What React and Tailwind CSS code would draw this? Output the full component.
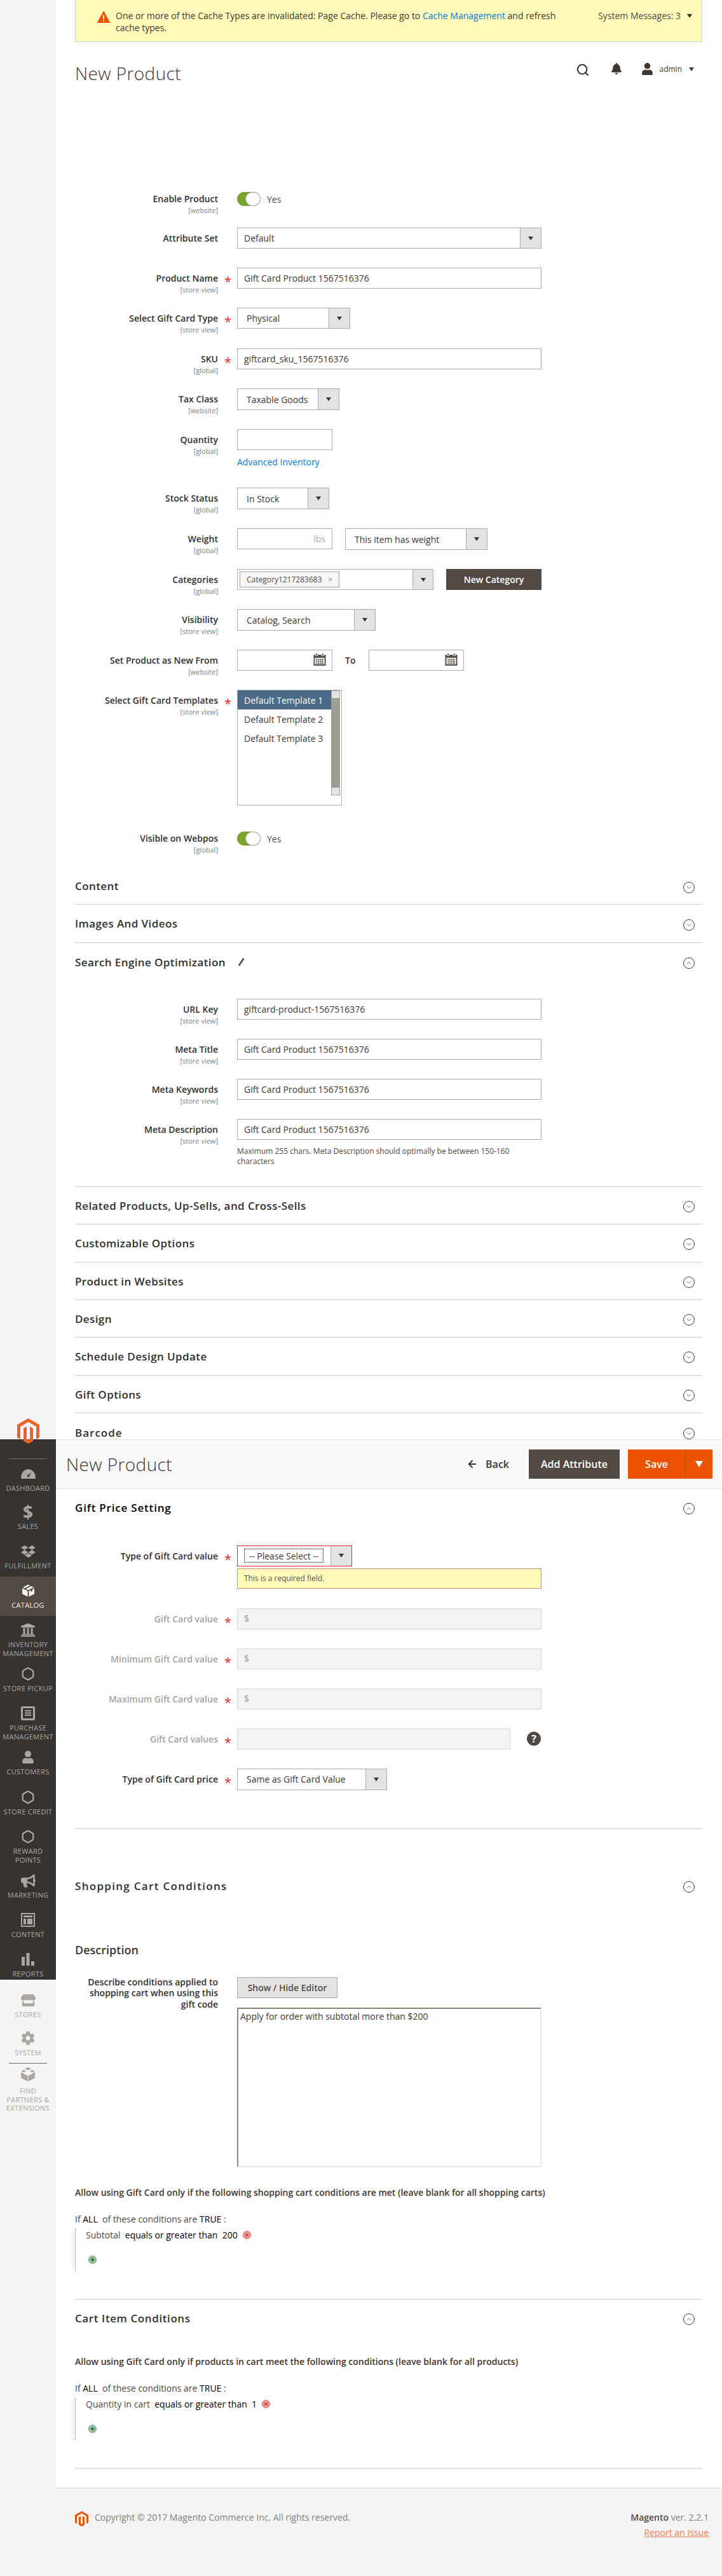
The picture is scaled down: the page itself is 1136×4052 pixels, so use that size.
import clsx from 'clsx'
import { ArrowLeft, ChevronDown, ChevronUp, Hexagon, Search } from 'lucide-react'
import { FaBell, FaBullhorn, FaCog, FaDropbox, FaStore, FaUniversity, FaUser } from 'react-icons/fa'

const MagentoLogo = ({ className }) => (
	<svg viewBox="0 0 35 40" className={className} fill="currentColor">
		<path d="M17.5 0 35 10v20l-5 2.900v-20L17.5 5.700 5 12.900v20L0 30V10z" />
		<path d="M17.5 40 10 35.700v-20l5-2.900v20l2.500 1.400 2.500-1.400v-20l5 2.900v20z" />
	</svg>
)

const GaugeIcon = () => (
	<svg viewBox="0 0 24 16" className="w-[23px] h-[15px]" fill="currentColor">
		<path fillRule="evenodd" d="M12 0C5 0 0 6 0 13v3h24v-3C24 6 19 0 12 0zm1.200 12.500c-.8 1.100-2.400 1-3-.2-.3-.7-.1-1.400.4-1.900l6-4.900-3.300 6.900z" />
	</svg>
)

const CubeIcon = () => (
	<svg viewBox="0 0 20 20" className="w-[19px] h-[20px]" fill="currentColor">
		<path d="M10 0 1 4.500l3 1.600 9-4.600zM15 2.500 6 7.100l4 2 9-4.600z" />
		<path d="M0 6v9.500L9 20V10.500zM20 6v9.500L11 20V10.500l3-1.500v3l3-1.500v-3z" />
	</svg>
)

const ListBoxIcon = () => (
	<svg viewBox="0 0 22 22" className="w-[22px] h-[22px]" fill="currentColor">
		<path fillRule="evenodd" d="M2 0h18a2 2 0 0 1 2 2v18a2 2 0 0 1-2 2H2a2 2 0 0 1-2-2V2a2 2 0 0 1 2-2zm1 3v16h16V3zm3 3h10v2H6zm0 3.500h10v2H6zM6 13h10v2H6z" />
	</svg>
)

const ContentIcon = () => (
	<svg viewBox="0 0 22 22" className="w-[22px] h-[22px]" fill="currentColor">
		<path fillRule="evenodd" d="M0 0h22v22H0zm2 2v18h18V2zm2 2h14v3H4zm0 5h4v9H4zm6 0h8v9h-8z" />
	</svg>
)

const BarsIcon = () => (
	<svg viewBox="0 0 20 20" className="w-[20px] h-[20px]" fill="currentColor">
		<path d="M0 6h5v14H0zM7.500 0h5v20h-5zM15 13h5v7h-5z" />
	</svg>
)

const BrickIcon = () => (
	<svg viewBox="0 0 22 22" className="w-[22px] h-[22px]" fill="currentColor">
		<path d="M11 0c2.500 0 4 1 4 2.500l-4 2-4-2C7 1 8.500 0 11 0zM5.500 3.400c-.3 1 1 2.200 2.500 2.600L4 8 0 6zM16.500 3.400 22 6l-4 2-4-2c1.500-.4 2.800-1.600 2.500-2.600z" />
		<path d="M0 7.500 10.500 13v9L0 16.500zM22 7.500 11.500 13v9L22 16.500z" />
	</svg>
)

const CalendarIcon = () => (
	<svg viewBox="0 0 20 20" className="w-[20px] h-[19px] text-[#514943]" fill="currentColor">
		<path fillRule="evenodd" d="M4 0h2v3H4zM14 0h2v3h-2zM0 2h3v2h4V2h6v2h4V2h3v18H0zm2 5v11h16V7zm2 2h2v2H4zm3 0h2v2H7zm3 0h2v2h-2zm3 0h3v2h-3zm-9 3h2v2H4zm3 0h2v2H7zm3 0h2v2h-2zm3 0h3v2h-3zm-9 3h2v2H4zm3 0h2v2H7zm3 0h2v2h-2zm3 0h3v2h-3z" />
	</svg>
)

const RemoveIcon = () => (
	<svg viewBox="0 0 14 14" className="ml-[8px] w-[13px] h-[13px]">
		<circle cx="7" cy="7" r="6.500" fill="#f19a9a" stroke="#d65a5a" />
		<path d="M4.500 4.500l5 5M9.500 4.500l-5 5" stroke="#b92c2c" strokeWidth="1.200" fill="none" />
	</svg>
)

const AddIcon = () => (
	<svg viewBox="0 0 14 14" className="ml-[4px] mt-[22px] w-[13px] h-[13px]">
		<circle cx="7" cy="7" r="6.500" fill="#9cc4a4" stroke="#5e9a6c" />
		<path d="M7 3.500v7M3.500 7h7" stroke="#2c6b3b" strokeWidth="1.800" fill="none" />
	</svg>
)

const menuDark = [
	{ label: ['Dashboard'], h: 'h-[60px]', icon: <GaugeIcon /> },
	{ label: ['Sales'], h: 'h-[62px]', icon: <span className="text-[28px] leading-none font-bold">$</span> },
	{ label: ['Fulfillment'], h: 'h-[62px]', icon: <FaDropbox size={23} /> },
	{ label: ['Catalog'], h: 'h-[62px]', icon: <CubeIcon />, active: true },
	{ label: ['Inventory', 'Management'], h: 'h-[69px]', icon: <FaUniversity size={24} /> },
	{ label: ['Store Pickup'], h: 'h-[62px]', icon: <Hexagon size={22} strokeWidth={2.5} /> },
	{ label: ['Purchase', 'Management'], h: 'h-[69px]', icon: <ListBoxIcon /> },
	{ label: ['Customers'], h: 'h-[63px]', icon: <FaUser size={20} /> },
	{ label: ['Store Credit'], h: 'h-[62px]', icon: <Hexagon size={22} strokeWidth={2.5} /> },
	{ label: ['Reward', 'Points'], h: 'h-[69px]', icon: <Hexagon size={22} strokeWidth={2.5} /> },
	{ label: ['Marketing'], h: 'h-[62px]', icon: <FaBullhorn size={23} /> },
	{ label: ['Content'], h: 'h-[62px]', icon: <ContentIcon /> },
	{ label: ['Reports'], h: 'h-[54px]', icon: <BarsIcon /> },
]

const MenuItem = ({ item }) => (
	<div className={clsx('flex flex-col items-center pt-[12px]', item.h, item.active ? 'bg-[#514943] text-[#f7f3eb]' : 'text-[#aaa6a0]')}>
		<div className="h-[20px] flex items-center justify-center">{item.icon}</div>
		<div className={clsx('text-[11px] leading-[13.5px] tracking-[0.3px] uppercase text-center', item.labelGap || 'mt-[6px]')}>
			{item.label.map((line) => (
				<div key={line} className="whitespace-nowrap">{line}</div>
			))}
		</div>
	</div>
)

const Sidebar = () => (
	<aside className="w-[88px] shrink-0 bg-[#f5f5f5] pt-[2231px]">
		<div className="relative z-10 flex justify-center">
			<MagentoLogo className="w-[35px] h-[40px] text-[#eb6326]" />
		</div>
		<div className="-mt-[7px] h-[850px] bg-[#373330] pt-[30px]">
			<div className="mx-[14px] h-px bg-[#736d68] mb-[1px]" />
			{menuDark.map((item) => (
				<MenuItem key={item.label[0]} item={item} />
			))}
		</div>
		<div className="pt-[10px]">
			<MenuItem item={{ label: ['Stores'], h: 'h-[60px]', icon: <FaStore size={23} /> }} />
			<MenuItem item={{ label: ['System'], h: 'h-[61px]', icon: <FaCog size={22} /> }} />
			<div className="mx-[14px] h-px bg-[#736d68]" />
			<div className="-mt-[5px]">
				<MenuItem item={{ label: ['Find', 'Partners &', 'Extensions'], h: 'h-[90px]', icon: <BrickIcon />, labelGap: 'mt-[9px]' }} />
			</div>
		</div>
	</aside>
)

const Field = ({ label, scope, required, muted, labelPad = 'pt-[7px]', className, children }) => (
	<div className={clsx('flex', className)}>
		<div className={clsx('w-[225px] h-0 text-right shrink-0', labelPad)}>
			<div className={clsx('text-[14px] leading-[20px] font-semibold', muted ? 'text-[#a3a3a3]' : 'text-[#303030]')}>{label}</div>
			{scope && <div className="text-[11px] leading-[14px] mt-[1px] text-[#808080]">[{scope}]</div>}
		</div>
		<div className={clsx('w-[30px] h-0 shrink-0 pl-[10px] text-[#e22626] text-[20px] leading-[30px]', labelPad)}>
			{required ? '*' : ''}
		</div>
		{children}
	</div>
)

const TextInput = ({ value = '', className = 'w-[479px]', disabled }) => (
	<input
		readOnly
		value={value}
		className={clsx(
			'h-[33px] border px-[10px] text-[14px] text-[#41362f] outline-none',
			disabled ? 'bg-[#f3f3f3] border-[#d6d6d6] text-[#999]' : 'bg-white border-[#adadad]',
			className
		)}
	/>
)

const PriceInput = () => (
	<div className="w-[479px] h-[33px] bg-[#f3f3f3] border border-[#d6d6d6] flex items-center pl-[10px] pb-[2px] text-[14px] text-[#999]">$</div>
)

const Caret = ({ className }) => (
	<span className={clsx('w-0 h-0 border-x-[4px] border-x-transparent border-t-[6px] border-t-[#41362f]', className)} />
)

const Select = ({ value, className, height = 'h-[34px]', pad = 'pl-[14px]' }) => (
	<div className={clsx('flex border border-[#adadad] bg-white', height, className)}>
		<div className={clsx('flex-1 flex items-center text-[14px] text-[#41362f]', pad)}>{value}</div>
		<div className="w-[33px] flex items-center justify-center bg-[#e3e3e3] border-l border-[#adadad]">
			<Caret />
		</div>
	</div>
)

const Toggle = () => (
	<div className="flex items-center gap-[10px]">
		<div className="w-[37px] h-[22px] rounded-full bg-[#79a22e] flex justify-end">
			<div className="w-[24px] h-[22px] rounded-full bg-white border border-[#adadad]" />
		</div>
		<span className="text-[14px] text-[#514943]">Yes</span>
	</div>
)

const DateInput = () => (
	<div className="w-[150px] h-[33px] bg-white border border-[#adadad] flex items-center justify-end pr-[9px] pb-[2px]">
		<CalendarIcon />
	</div>
)

const CircleChevron = ({ open }) => (
	<div className="w-[18px] h-[18px] mr-[12px] mt-[4px] rounded-full border border-[#41362f] flex items-center justify-center text-[#41362f]">
		{open ? <ChevronUp size={12} strokeWidth={1.5} /> : <ChevronDown size={12} strokeWidth={1.5} />}
	</div>
)

const SectionHead = ({ title, open, border = true, className = 'h-[60px]', titleClass = 'tracking-[0.4px]', children, dark }) => (
	<div className={clsx('flex items-center justify-between', border && 'border-b border-[#cccccc]', className)}>
		<div className="flex items-center gap-[18px] mt-[1px]">
			<h3 className={clsx('text-[17px] font-semibold', titleClass, dark ? 'text-black' : 'text-[#303030]')}>{title}</h3>
			{children}
		</div>
		<CircleChevron open={open} />
	</div>
)

const ConditionTree = ({ attr, value, heading, className }) => (
	<div className={className}>
		<p className="text-[14px] leading-[20px] font-semibold text-[#41362f]">{heading}</p>
		<p className="mt-[22px] text-[14px] leading-[20px] text-[#514943]">
			If <span className="text-black">ALL</span>&nbsp; of these conditions are <span className="text-black">TRUE</span> :
		</p>
		<div className="mt-[5px] h-[66px] border-l border-dotted border-[#888] pl-[16px]">
			<div className="flex items-center h-[20px] mt-[4px] text-[14px] text-black whitespace-pre">
				<span className="text-[#514943]">{attr}</span>
				<span>{'  equals or greater than  '}{value}</span>
				<RemoveIcon />
			</div>
			<AddIcon />
		</div>
	</div>
)

const App = () => {
	const collapsed = ['Related Products, Up-Sells, and Cross-Sells', 'Customizable Options', 'Product in Websites', 'Design', 'Schedule Design Update', 'Gift Options']

	return (
		<div className="flex w-[1136px] h-[4052px] overflow-hidden bg-white font-['Open_Sans',sans-serif] text-[#41362f]">
			<Sidebar />
			<main className="flex-1 min-w-0 flex flex-col">
				<div className="pl-[30px] pr-[31px]">
					<div className="h-[66px] bg-[#fffbbb] border border-t-0 border-[#cccccc] flex items-start pl-[33px] pr-[15px] pt-[15px]">
						<svg viewBox="0 0 22 20" className="w-[22px] h-[19px] mt-[2px] shrink-0" fill="#eb5202">
							<path d="M11 0 22 20H0z" />
							<path d="M10 7h2v7h-2zM10 15.500h2v2h-2z" fill="#fffbbb" />
						</svg>
						<p className="w-[730px] ml-[8px] text-[14px] leading-[19px]">
							One or more of the Cache Types are invalidated: Page Cache. Please go to <span className="text-[#007bdb]">Cache Management</span> and refresh cache types.
						</p>
						<div className="ml-auto text-[14px] leading-[19px] flex items-center gap-[10px] text-[#514943]">
							System Messages: 3 <Caret className="border-t-[#303030]" />
						</div>
					</div>

					<div className="flex justify-between mt-[27px] h-[44px]">
						<h1 className="text-[28px] leading-[44px] font-light tracking-[0.4px]">New Product</h1>
						<div className="flex items-start gap-[33px] mt-[6px] text-[#41362f] mr-[13px]">
							<Search size={22} strokeWidth={2.25} />
							<FaBell size={18} />
							<div className="flex items-center gap-[8px] -ml-[3px]">
								<FaUser size={19} />
								<span className="text-[12px] ml-[1px]">admin</span>
								<Caret className="border-t-[#41362f] ml-[3px]" />
							</div>
						</div>
					</div>

					<Field label="Enable Product" scope="website" labelPad="pt-[1px]" className="mt-[165px] h-[22px]"><Toggle /></Field>
					<Field label="Attribute Set" className="mt-[34px]"><Select value="Default" pad="pl-[10px]" height="h-[33px]" className="w-[479px]" /></Field>
					<Field label="Product Name" scope="store view" required className="mt-[30px]"><TextInput value="Gift Card Product 1567516376" /></Field>
					<Field label="Select Gift Card Type" scope="store view" required className="mt-[30px]"><Select value="Physical" height="h-[33px]" className="w-[178px]" /></Field>
					<Field label="SKU" scope="global" required className="mt-[31px]"><TextInput value="giftcard_sku_1567516376" /></Field>
					<Field label="Tax Class" scope="website" className="mt-[30px]"><Select value="Taxable Goods" className="w-[161px]" /></Field>
					<Field label="Quantity" scope="global" className="mt-[30px]">
						<div>
							<TextInput className="w-[150px] block" />
							<a className="block mt-[9px] text-[14px] leading-[20px] text-[#007bdb]">Advanced Inventory</a>
						</div>
					</Field>
					<Field label="Stock Status" scope="global" className="mt-[30px]"><Select value="In Stock" className="w-[145px]" /></Field>
					<Field label="Weight" scope="global" className="mt-[30px]">
						<div className="flex gap-[20px]">
							<div className="w-[150px] h-[33px] border border-[#adadad] flex items-center justify-end pr-[10px] text-[14px] text-[#adadad]">lbs</div>
							<Select value="This item has weight" className="w-[224px]" />
						</div>
					</Field>
					<Field label="Categories" scope="global" className="mt-[30px]">
						<div className="flex gap-[20px]">
							<div className="w-[309px] h-[33px] border border-[#adadad] flex">
								<div className="flex-1 pt-[3px] pl-[3px]">
									<div className="w-[157px] h-[25px] border border-[#a79d95] bg-[#f7f7f7] flex items-center justify-between px-[10px] text-[12px] text-[#514943]">
										Category1217283683 <span className="text-[#8a837e]">×</span>
									</div>
								</div>
								<div className="w-[32px] flex items-center justify-center bg-[#e3e3e3] border-l border-[#adadad]"><Caret /></div>
							</div>
							<button className="w-[150px] h-[33px] bg-[#514943] text-white text-[14px] font-semibold">New Category</button>
						</div>
					</Field>
					<Field label="Visibility" scope="store view" className="mt-[30px]"><Select value="Catalog, Search" className="w-[218px]" /></Field>
					<Field label="Set Product as New From" scope="website" className="mt-[30px]">
						<div className="flex items-center">
							<DateInput />
							<span className="w-[57px] pl-[20px] text-[14px] font-semibold">To</span>
							<DateInput />
						</div>
					</Field>
					<Field label="Select Gift Card Templates" scope="store view" required className="mt-[30px]">
						<div className="w-[165px] h-[182px] border border-[#adadad] flex items-start">
							<div className="w-[147px] text-[14px] text-[#41362f]">
								<div className="h-[30px] px-[10px] flex items-center bg-[#4a6a88] text-white">Default Template 1</div>
								<div className="h-[30px] px-[10px] flex items-center">Default Template 2</div>
								<div className="h-[30px] px-[10px] flex items-center">Default Template 3</div>
							</div>
							<div className="w-[14px] h-[165px] bg-[#a09d93] flex flex-col justify-between">
								<div className="h-[13px] bg-[#e3e3e3] border border-[#a09d93]" />
								<div className="h-[13px] bg-[#e3e3e3] border border-[#a09d93]" />
							</div>
						</div>
					</Field>
					<Field label="Visible on Webpos" scope="global" labelPad="pt-[1px]" className="mt-[41px] h-[22px]"><Toggle /></Field>

					<SectionHead title="Content" className="mt-[35px] h-[58px]" />
					<SectionHead title="Images And Videos" />
					<SectionHead title="Search Engine Optimization" open border={false}>
						<svg viewBox="0 0 14 18" className="w-[12px] h-[14px] text-[#514943]" fill="currentColor">
							<path d="M11 0l3 2-8.500 12.500L2 17l.5-4.200z" />
						</svg>
					</SectionHead>

					<div className="border-b border-[#cccccc] pb-[31px]">
						<Field label="URL Key" scope="store view" className="mt-[28px]"><TextInput value="giftcard-product-1567516376" /></Field>
						<Field label="Meta Title" scope="store view" className="mt-[30px]"><TextInput value="Gift Card Product 1567516376" /></Field>
						<Field label="Meta Keywords" scope="store view" className="mt-[30px]"><TextInput value="Gift Card Product 1567516376" /></Field>
						<Field label="Meta Description" scope="store view" className="mt-[30px]">
							<div className="w-[479px]">
								<TextInput value="Gift Card Product 1567516376" />
								<p className="mt-[10px] text-[12px] leading-[16px] text-[#514943]">Maximum 255 chars. Meta Description should optimally be between 150-160 characters</p>
							</div>
						</Field>
					</div>

					{collapsed.map((title) => (
						<SectionHead key={title} title={title} className="h-[59.33px]" />
					))}
					<div className="h-[41px] overflow-hidden">
						<SectionHead title="Barcode" border={false} className="h-[60px]" titleClass="tracking-[1px]" />
					</div>
				</div>

				<div className="h-[78px] shrink-0 bg-[#f8f8f8] border-y border-[#e3e3e3] flex items-center justify-between pl-[16px] pr-[15px]">
					<h1 className="text-[28px] font-light tracking-[0.4px]">New Product</h1>
					<div className="flex items-center">
						<ArrowLeft size={18} strokeWidth={2.5} className="mr-[12px]" />
						<span className="text-[16px] font-semibold text-[#41362f] mr-[31px]">Back</span>
						<button className="w-[143px] h-[46px] bg-[#514943] text-white text-[16px] font-semibold">Add Attribute</button>
						<div className="ml-[13px] w-[133px] h-[46px] flex bg-[#eb5202] text-white text-[16px] font-semibold">
							<button className="w-[91px] border-r border-[#c94502]">Save</button>
							<div className="flex-1 flex items-center justify-center">
								<span className="w-0 h-0 border-x-[6px] border-x-transparent border-t-[10px] border-t-white" />
							</div>
						</div>
					</div>
				</div>

				<div className="pl-[30px] pr-[31px]">
					<SectionHead title="Gift Price Setting" open dark border={false} className="h-[58px]" titleClass="tracking-[0.8px]" />
					<Field label="Type of Gift Card value" required className="mt-[31px]">
						<div>
							<div className="w-[181px] h-[33px] border border-[#e22626] flex bg-white">
								<div className="flex-1 flex items-center pl-[10px]">
									<div className="h-[22px] w-[125px] border border-dotted border-black flex items-center justify-center text-[14px] whitespace-nowrap">-- Please Select --</div>
								</div>
								<div className="w-[33px] flex items-center justify-center bg-[#e3e3e3] border-l border-[#adadad]"><Caret /></div>
							</div>
							<div className="mt-[3px] w-[479px] h-[32px] border border-[#e0837a] bg-[#fffbbb] flex items-center pl-[10px] text-[12px] text-[#555]">This is a required field.</div>
						</div>
					</Field>
					<Field label="Gift Card value" required muted className="mt-[31px]"><PriceInput /></Field>
					<Field label="Minimum Gift Card value" required muted className="mt-[30px]"><PriceInput /></Field>
					<Field label="Maximum Gift Card value" required muted className="mt-[30px]"><PriceInput /></Field>
					<Field label="Gift Card values" required muted className="mt-[30px]">
						<div className="flex items-center">
							<TextInput disabled className="w-[430px]" />
							<span className="ml-[26px] w-[22px] h-[22px] rounded-full bg-[#514943] text-white text-[16px] font-bold flex items-center justify-center">?</span>
						</div>
					</Field>
					<Field label="Type of Gift Card price" required className="mt-[30px]"><Select value="Same as Gift Card Value" className="w-[236px]" /></Field>

					<div className="mt-[60px] h-px bg-[#cccccc]" />
					<SectionHead title="Shopping Cart Conditions" open border={false} className="mt-[59px] h-[60px]" titleClass="tracking-[1.3px]" />
					<h3 className="mt-[59px] text-[18px] leading-[24px] font-semibold">Description</h3>
					<Field
						label={<div className="leading-[17.5px] -mt-[1px]">Describe conditions applied to<br />shopping cart when using this<br />gift code</div>}
						labelPad="pt-[0px]"
						className="mt-[31px]"
					>
						<div>
							<button className="block w-[158px] h-[33px] bg-[#e3e3e3] border border-[#adadad] text-[14px] font-semibold text-[#514943]">Show / Hide Editor</button>
							<textarea
								readOnly
								value="Apply for order with subtotal more than $200"
								className="block mt-[15px] w-[479px] h-[251px] resize-none px-[3px] py-[2px] text-[14px] leading-[20px] text-[#41362f] border-2 border-t-[#8a867c] border-l-[#8a867c] border-r-[#e9e8e4] border-b-[#e9e8e4] outline-none"
							/>
						</div>
					</Field>

					<ConditionTree
						className="mt-[30px] pb-[44px] border-b border-[#cccccc]"
						heading="Allow using Gift Card only if the following shopping cart conditions are met (leave blank for all shopping carts)"
						attr="Subtotal"
						value="200"
					/>
					<SectionHead title="Cart Item Conditions" open border={false} className="h-[58px]" titleClass="tracking-[0.6px]" />
					<ConditionTree
						className="mt-[30px] pb-[44px] border-b border-[#cccccc]"
						heading="Allow using Gift Card only if products in cart meet the following conditions (leave blank for all products)"
						attr="Quantity in cart"
						value="1"
					/>
				</div>

				<footer className="mt-[30px] flex-1 bg-[#f4f4f4] border-t border-[#dddddd] pl-[30px] pr-[21px] pt-[36px] flex justify-between">
					<div className="flex items-start gap-[10px]">
						<MagentoLogo className="w-[21px] h-[24px] text-[#eb5202]" />
						<span className="text-[14px] leading-[20px] text-[#808080]">Copyright © 2017 Magento Commerce Inc. All rights reserved.</span>
					</div>
					<div className="text-right text-[14px] leading-[20px]">
						<div className="text-[#808080]"><b className="font-semibold text-[#514943]">Magento</b> ver. 2.2.1</div>
						<a className="block mt-[4px] text-[#f47b52] underline">Report an Issue</a>
					</div>
				</footer>
			</main>
		</div>
	)
}

export default App
